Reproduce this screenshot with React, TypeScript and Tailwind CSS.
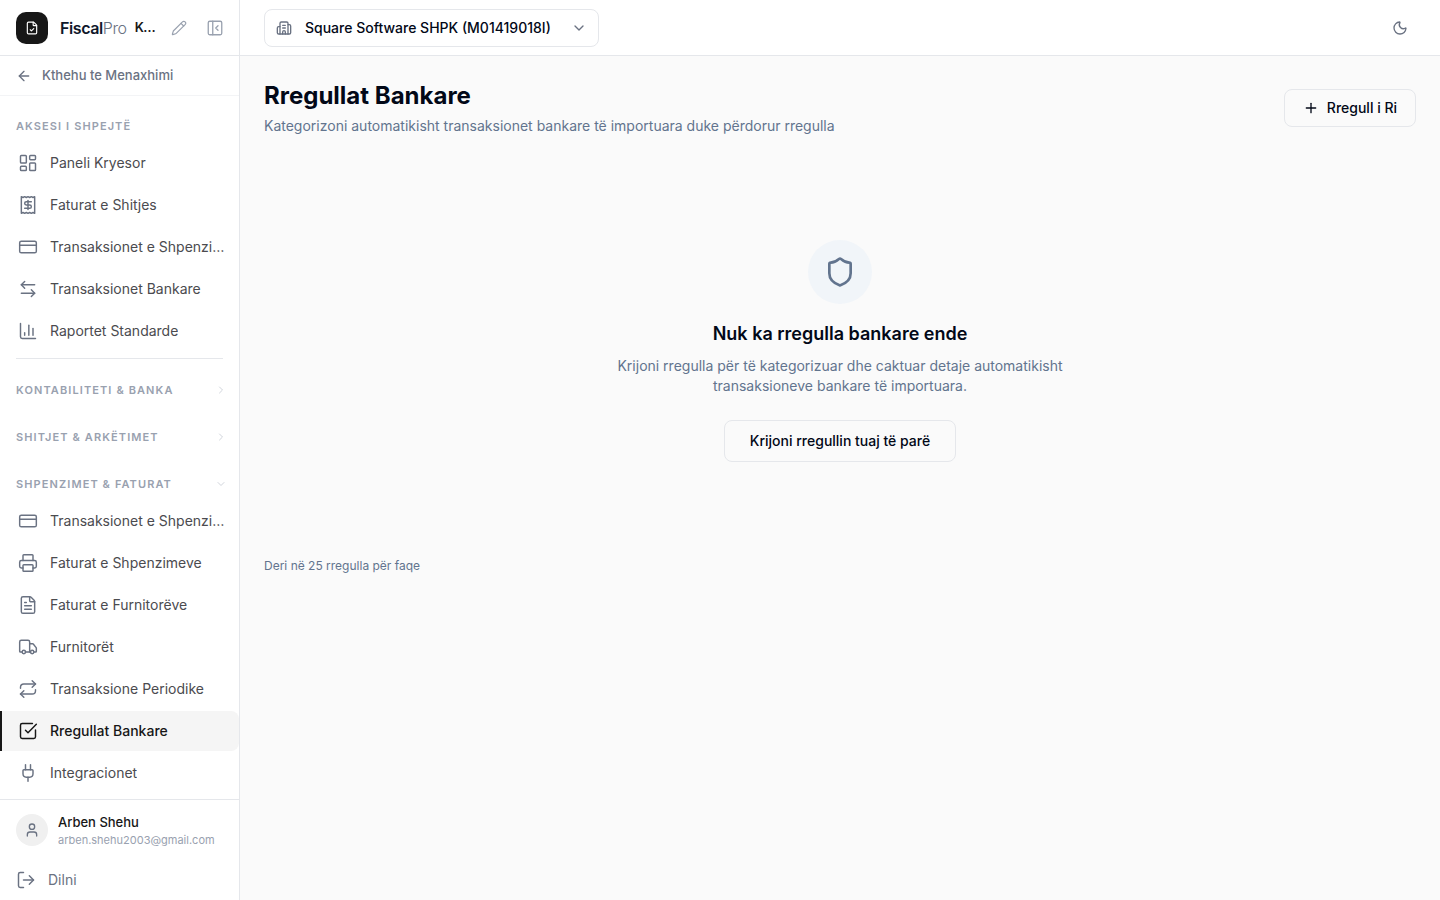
import {
  ArrowLeft,
  ArrowLeftRight,
  Building2,
  ChartColumn,
  ChevronDown,
  ChevronRight,
  CreditCard,
  FileCheck,
  FileText,
  LayoutDashboard,
  LogOut,
  Moon,
  PanelLeftClose,
  Pencil,
  Plug,
  Plus,
  Printer,
  Receipt,
  Repeat,
  Shield,
  SquareCheckBig,
  Truck,
  User,
  type LucideIcon,
} from 'lucide-react';
import { useState } from 'react';

type NavItem = {
  label: string;
  icon: LucideIcon;
  active?: boolean;
};

const quickAccess: NavItem[] = [
  { label: 'Paneli Kryesor', icon: LayoutDashboard },
  { label: 'Faturat e Shitjes', icon: Receipt },
  { label: 'Transaksionet e Shpenzimeve', icon: CreditCard },
  { label: 'Transaksionet Bankare', icon: ArrowLeftRight },
  { label: 'Raportet Standarde', icon: ChartColumn },
];

const expenses: NavItem[] = [
  { label: 'Transaksionet e Shpenzimeve', icon: CreditCard },
  { label: 'Faturat e Shpenzimeve', icon: Printer },
  { label: 'Faturat e Furnitorëve', icon: FileText },
  { label: 'Furnitorët', icon: Truck },
  { label: 'Transaksione Periodike', icon: Repeat },
  { label: 'Rregullat Bankare', icon: SquareCheckBig, active: true },
  { label: 'Integracionet', icon: Plug },
];

const NavList = ({ items }: { items: NavItem[] }) => (
  <ul className="space-y-0.5">
    {items.map(({ label, icon: Icon, active }) => (
      <li key={label}>
        <a
          href="#"
          aria-current={active ? 'page' : undefined}
          className={
            active
              ? 'flex h-10 items-center gap-3 rounded-r-lg border-l-2 border-[#171717] bg-[#f5f5f5] pr-3 pl-4 font-medium text-[#171717] text-sm'
              : 'flex h-10 items-center gap-3 rounded-r-lg border-transparent border-l-2 pr-3 pl-4 text-[#4b4b4f] text-sm hover:bg-[#fafafa]'
          }
        >
          <Icon
            className={active ? 'h-5 w-5 shrink-0' : 'h-5 w-5 shrink-0 text-gray-500'}
            strokeWidth={1.75}
          />
          <span className="truncate">{label}</span>
        </a>
      </li>
    ))}
  </ul>
);

const NavSection = ({ title, items = [] }: { title: string; items?: NavItem[] }) => {
  const [open, setOpen] = useState(items.length > 0);
  const Chevron = open ? ChevronDown : ChevronRight;

  return (
    <section className="pt-[13px]">
      <button
        type="button"
        onClick={() => setOpen(!open)}
        aria-expanded={open}
        className="flex h-[34px] w-full items-center justify-between pr-3 pl-4 font-semibold text-[11px] text-gray-400 uppercase tracking-widest"
      >
        {title}
        <Chevron className="h-3 w-3 text-gray-300" />
      </button>
      {open && <NavList items={items} />}
    </section>
  );
};

const Sidebar = () => (
  <aside className="flex w-60 shrink-0 flex-col border-gray-200 border-r bg-white">
    <div className="flex h-14 shrink-0 items-center border-gray-200 border-b pr-[9px] pl-4">
      <span className="flex h-8 w-8 shrink-0 items-center justify-center rounded-[10px] bg-[#171717] text-white">
        <FileCheck className="h-3.5 w-3.5" />
      </span>
      <span className="ml-3 text-base tracking-tight">
        <span className="font-semibold text-[#0f172a]">Fiscal</span>
        <span className="font-light text-gray-500">Pro</span>
      </span>
      <span className="ml-2 min-w-0 flex-1 truncate font-semibold text-[#171717] text-[13px]">
        Kontabiliteti
      </span>
      <button type="button" aria-label="Ndrysho" className="ml-2 p-1.5 text-gray-400">
        <Pencil className="h-4 w-4" strokeWidth={1.75} />
      </button>
      <button type="button" aria-label="Mbyll menunë" className="ml-[7px] p-1.5 text-gray-400">
        <PanelLeftClose className="h-[18px] w-[18px]" strokeWidth={1.75} />
      </button>
    </div>

    <a
      href="#"
      className="flex h-10 shrink-0 items-center gap-2.5 border-gray-100 border-b px-4 font-medium text-[13px] text-gray-500"
    >
      <ArrowLeft className="h-4 w-4" />
      Kthehu te Menaxhimi
    </a>

    <nav className="min-h-0 flex-1 overflow-y-auto">
      <section className="pt-[13px]">
        <h2 className="flex h-[34px] items-center px-4 font-semibold text-[11px] text-gray-400 uppercase tracking-widest">
          Aksesi i shpejtë
        </h2>
        <NavList items={quickAccess} />
      </section>
      <hr className="mx-4 mt-[7px] mb-px border-gray-200" />
      <NavSection title="Kontabiliteti & Banka" />
      <NavSection title="Shitjet & Arkëtimet" />
      <NavSection title="Shpenzimet & Faturat" items={expenses} />
    </nav>

    <div className="shrink-0 border-gray-200 border-t pt-3">
      <div className="flex items-center gap-2.5 px-4">
        <span className="flex h-8 w-8 shrink-0 items-center justify-center rounded-full bg-[#f0f0f0] text-gray-500">
          <User className="h-4 w-4" />
        </span>
        <div className="min-w-0">
          <p className="truncate font-medium text-[#171717] text-[13px] leading-5">Arben Shehu</p>
          <p className="truncate text-[11px] text-gray-400 leading-4">arben.shehu2003@gmail.com</p>
        </div>
      </div>
      <button
        type="button"
        className="mt-3 flex h-10 w-full items-center gap-3 px-4 text-gray-500 text-sm"
      >
        <LogOut className="h-5 w-5" strokeWidth={1.75} />
        Dilni
      </button>
    </div>
  </aside>
);

const Topbar = () => (
  <header className="flex h-14 shrink-0 items-center justify-between border-gray-200 border-b bg-white px-6">
    <label className="flex h-[38px] items-center rounded-lg border border-gray-200 px-[11px] text-gray-500">
      <Building2 className="h-4 w-4" />
      <select
        aria-label="Kompania"
        className="ml-[13px] appearance-none bg-transparent font-medium text-[#020817] text-sm outline-none"
      >
        <option>Square Software SHPK (M01419018I)</option>
      </select>
      <ChevronDown className="pointer-events-none ml-5 h-4 w-4" />
    </label>
    <button type="button" aria-label="Ndrysho temën" className="p-2 text-gray-500">
      <Moon className="h-4 w-4" />
    </button>
  </header>
);

export default function App() {
  return (
    <div className="flex h-screen bg-[#fafafa] font-['Inter',sans-serif]">
      <Sidebar />
      <div className="flex min-w-0 flex-1 flex-col">
        <Topbar />
        <main className="flex-1 overflow-y-auto p-6">
          <div className="flex items-center justify-between">
            <div>
              <h1 className="font-bold text-2xl text-[#020817]">Rregullat Bankare</h1>
              <p className="mt-1 text-slate-500 text-sm">
                Kategorizoni automatikisht transaksionet bankare të importuara duke përdorur rregulla
              </p>
            </div>
            <button
              type="button"
              className="flex h-[38px] items-center gap-2 rounded-lg border border-gray-200 px-[18px] font-medium text-[#020817] text-sm"
            >
              <Plus className="h-4 w-4" />
              Rregull i Ri
            </button>
          </div>

          <div className="mt-6 flex flex-col items-center py-20 text-center">
            <span className="flex h-16 w-16 items-center justify-center rounded-full bg-slate-100 text-slate-500">
              <Shield className="h-8 w-8" />
            </span>
            <h2 className="mt-4 font-semibold text-[#020817] text-lg">
              Nuk ka rregulla bankare ende
            </h2>
            <p className="mt-2 max-w-md text-slate-500 text-sm">
              Krijoni rregulla për të kategorizuar dhe caktuar detaje automatikisht transaksioneve
              bankare të importuara.
            </p>
            <button
              type="button"
              className="mt-6 h-[42px] rounded-lg border border-gray-200 px-[25px] font-medium text-[#020817] text-sm"
            >
              Krijoni rregullin tuaj të parë
            </button>
          </div>

          <p className="mt-4 text-slate-500 text-xs">Deri në 25 rregulla për faqe</p>
        </main>
      </div>
    </div>
  );
}
